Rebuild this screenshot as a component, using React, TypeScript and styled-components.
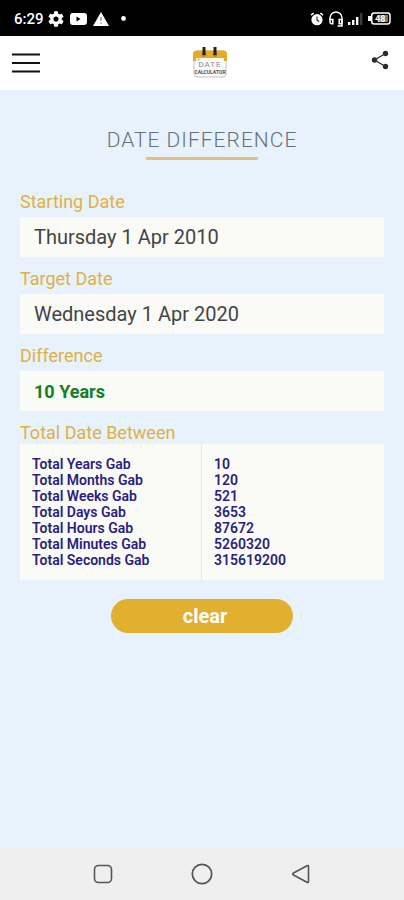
import React, { useState } from "react";
import styled, { createGlobalStyle } from "styled-components";

const GlobalStyle = createGlobalStyle`
  *, *::before, *::after { box-sizing: border-box; }
  body {
    margin: 0;
    background: #e7f2fc;
    font-family: Roboto, "Liberation Sans", sans-serif;
  }
  button, input { font-family: inherit; }
`;

const Screen = styled.div`
  display: flex;
  flex-direction: column;
  min-height: 100vh;
`;

const StatusBar = styled.div`
  display: flex;
  align-items: center;
  justify-content: space-between;
  height: 36px;
  padding: 1px 13px 0 14px;
  background: #000;
  color: #fff;
`;

const StatusGroup = styled.div<{ $gap: number }>`
  display: flex;
  align-items: center;
  gap: ${(p) => p.$gap}px;
`;

const Clock = styled.span`
  font-size: 15px;
  line-height: 20px;
  font-weight: 500;
`;

const Header = styled.header`
  display: flex;
  align-items: center;
  justify-content: space-between;
  height: 54px;
  padding: 0 15px 0 12px;
  background: #fff;
`;

const IconButton = styled.button`
  display: flex;
  padding: 0;
  border: 0;
  background: none;
  color: #222;
  cursor: pointer;
`;

const MenuButton = styled(IconButton)`
  padding-right: 8px;
`;

const ShareButton = styled(IconButton)`
  padding-bottom: 7px;
`;

const Main = styled.main`
  flex: 1;
  display: flex;
  flex-direction: column;
  padding: 36px 20px 24px;
`;

const Title = styled.h1`
  align-self: center;
  display: flex;
  flex-direction: column;
  align-items: center;
  margin: 0 0 32px;
  color: #65717b;
  font-size: 21px;
  line-height: 28px;
  font-weight: 300;
  letter-spacing: 1px;

  &::after {
    content: "";
    width: 112px;
    height: 3px;
    margin-top: 3px;
    background: #e2c080;
  }
`;

const Form = styled.form`
  display: flex;
  flex-direction: column;
  gap: 12px;
`;

const Field = styled.div<{ $tight?: boolean }>`
  display: flex;
  flex-direction: column;
  gap: ${(p) => (p.$tight ? 1 : 5)}px;
`;

const Label = styled.label`
  align-self: flex-start;
  color: #dfb142;
  font-size: 18px;
  line-height: 20px;
`;

const DateInput = styled.input`
  width: 100%;
  height: 40px;
  padding: 0 14px;
  border: 0;
  background: #fafaf7;
  color: #444;
  font-size: 20px;
`;

const Result = styled.output`
  height: 40px;
  padding: 0 14px;
  background: #fafaf7;
  color: #128023;
  font-size: 18px;
  line-height: 42px;
  font-weight: 700;
`;

const Totals = styled.table`
  width: 100%;
  border-collapse: separate;
  border-spacing: 0;
  table-layout: fixed;
  background: #fafaf7;
  color: #2a1f80;
  font-size: 14px;
  line-height: 16px;
  font-weight: 600;
  text-align: left;

  th, td { padding: 0 12px; font-weight: inherit; }
  th { border-right: 1px solid #e4e5e4; }
  tr:first-child > * { padding-top: 12px; }
  tr:last-child > * { padding-bottom: 12px; }
`;

const ClearButton = styled.button`
  align-self: center;
  width: 50%;
  height: 34px;
  margin-top: 7px;
  padding: 0 0 0 6px;
  border: 0;
  border-radius: 17px;
  background: #e0b02e;
  color: #fff;
  font-size: 20px;
  line-height: 34px;
  font-weight: 700;
  cursor: pointer;
`;

const NavBar = styled.nav`
  display: flex;
  align-items: center;
  justify-content: center;
  gap: 78px;
  height: 53px;
  background: #efefef;
`;

const NavButton = styled(IconButton)`
  color: #555;
`;

const GearIcon = () => (
  <svg width="16" height="16" viewBox="2 2 20 20" fill="currentColor" aria-hidden="true">
    <path d="M19.14 12.94a7 7 0 0 0 0-1.88l2.03-1.58a.5.5 0 0 0 .12-.61l-1.92-3.32a.5.5 0 0 0-.59-.22l-2.39.96a7 7 0 0 0-1.62-.94l-.36-2.54a.5.5 0 0 0-.48-.41h-3.84a.5.5 0 0 0-.47.41l-.36 2.54a7 7 0 0 0-1.62.94l-2.39-.96a.5.5 0 0 0-.59.22L2.74 8.87a.5.5 0 0 0 .12.61l2.03 1.58a7 7 0 0 0 0 1.88l-2.03 1.58a.5.5 0 0 0-.12.61l1.92 3.32c.12.22.37.29.59.22l2.39-.96a7 7 0 0 0 1.62.94l.36 2.54c.05.24.24.41.48.41h3.84c.24 0 .44-.17.47-.41l.36-2.54a7 7 0 0 0 1.62-.94l2.39.96c.22.08.47 0 .59-.22l1.92-3.32a.5.5 0 0 0-.12-.61zM12 15.2A3.2 3.2 0 1 1 12 8.8a3.2 3.2 0 0 1 0 6.4z" />
  </svg>
);

const VideoIcon = () => (
  <svg width="17" height="12" viewBox="0 0 17 12" aria-hidden="true">
    <rect width="17" height="12" rx="3" fill="#fff" />
    <path d="M6.5 3.500 10.500 6 6.500 8.500z" fill="#000" />
  </svg>
);

const WarningIcon = () => (
  <svg width="16" height="14" viewBox="0 0 16 14" aria-hidden="true">
    <path d="M8 0 16 14H0z" fill="#fff" />
    <path d="M8 5v4M8 10.500V12" stroke="#888" strokeWidth="1.200" />
  </svg>
);

const DotIcon = () => (
  <svg width="5" height="5" viewBox="0 0 5 5" aria-hidden="true">
    <circle cx="2.500" cy="2.500" r="2.400" fill="#fff" />
  </svg>
);

const AlarmIcon = () => (
  <svg width="14" height="14" viewBox="0 0 14 14" fill="none" aria-hidden="true">
    <circle cx="7" cy="7.700" r="5.600" fill="#fff" />
    <path d="M1 3.200 3.700 1M13 3.200 10.300 1" stroke="#fff" strokeWidth="1.600" />
    <path d="M7 4.600v3.300l2.200 1.600" stroke="#222" strokeWidth="1.100" />
  </svg>
);

const HeadsetIcon = () => (
  <svg width="14" height="16" viewBox="0 0 14 16" fill="none" stroke="#fff" strokeWidth="1.500" aria-hidden="true">
    <path d="M1 9V7a6 6 0 0 1 12 0v5.500" />
    <path d="M1 8.500h2.800v4.200H2.400A1.400 1.400 0 0 1 1 11.300zM13 8.500h-2.800v4.200H13zM13 12.500V15H8.500" />
  </svg>
);

const SignalIcon = () => (
  <svg width="15" height="13" viewBox="0 0 15 13" aria-hidden="true">
    <path d="M0 10h2.400v3H0zM4 8h2.400v5H4zM8 5h2.400v8H8z" fill="#fff" />
    <path d="M12 1h2.400v12H12z" fill="#3d3d3d" />
  </svg>
);

const BatteryIcon = () => (
  <svg width="23" height="13" viewBox="0 0 23 13" aria-label="Battery 48">
    <path d="M0 4h3v5H0z" fill="#fff" />
    <rect x="3.700" y="1" width="18.300" height="11" rx="2.500" fill="none" stroke="#fff" strokeWidth="1.500" />
    <rect x="11" y="3" width="9" height="7" fill="#777" />
    <text x="7" y="10" fill="#fff" fontSize="9" fontWeight="700">48</text>
  </svg>
);

const MenuIcon = () => (
  <svg width="28" height="22" viewBox="0 0 28 22" stroke="#111" strokeWidth="2.200" aria-hidden="true">
    <path d="M0 2.500h28M0 11h28M0 19.500h28" />
  </svg>
);

const ShareIcon = () => (
  <svg width="18" height="20" viewBox="0 0 18 20" aria-hidden="true">
    <path d="M14.500 3.500 3.500 10l11 6.500" fill="none" stroke="#333" strokeWidth="1.400" />
    <g fill="#2b2b2b">
      <circle cx="14.500" cy="3.500" r="2.700" />
      <circle cx="3.500" cy="10" r="2.700" />
      <circle cx="14.500" cy="16.500" r="2.700" />
    </g>
  </svg>
);

const Logo = () => (
  <svg width="36" height="34" viewBox="0 0 36 34" role="img" aria-label="Date Calculator">
    <rect x="2" y="5" width="32" height="26" rx="3" fill="#fafafa" stroke="#c4c4c4" />
    <path d="M1 15V8a3.500 3.500 0 0 1 3.500-3.500h27A3.500 3.500 0 0 1 35 8v7z" fill="#e5ab25" />
    <path d="M4 12h28v4H4z" fill="#fafafa" />
    <circle cx="6.500" cy="13.500" r="1" fill="#b5a36c" />
    <circle cx="12" cy="8.500" r="2.200" fill="#a88029" />
    <circle cx="23" cy="8.500" r="2.200" fill="#a88029" />
    <path d="M12 1v8M23 1v8" stroke="#222" strokeWidth="3" />
    <text x="18" y="21" textAnchor="middle" fontSize="8" letterSpacing="1" fill="#8b8b8b">DATE</text>
    <text x="18" y="28" textAnchor="middle" fontSize="5" fontWeight="700" fill="#555">CALCULATOR</text>
  </svg>
);

const navProps = {
  width: 20,
  height: 20,
  viewBox: "0 0 20 20",
  fill: "none",
  stroke: "currentColor",
  strokeWidth: 1.6,
  "aria-hidden": true,
};

const totals = [
  ["Years", "10"],
  ["Months", "120"],
  ["Weeks", "521"],
  ["Days", "3653"],
  ["Hours", "87672"],
  ["Minutes", "5260320"],
  ["Seconds", "315619200"],
];

export default function App() {
  const [start, setStart] = useState("Thursday 1 Apr 2010");
  const [target, setTarget] = useState("Wednesday 1 Apr 2020");
  const [cleared, setCleared] = useState(false);

  const clear = () => {
    setStart("");
    setTarget("");
    setCleared(true);
  };

  return (
    <Screen>
      <GlobalStyle />
      <StatusBar>
        <StatusGroup $gap={12}>
          <StatusGroup $gap={4}>
            <Clock>6:29</Clock>
            <StatusGroup $gap={6}>
              <GearIcon />
              <VideoIcon />
              <WarningIcon />
            </StatusGroup>
          </StatusGroup>
          <DotIcon />
        </StatusGroup>
        <StatusGroup $gap={5}>
          <AlarmIcon />
          <HeadsetIcon />
          <SignalIcon />
          <BatteryIcon />
        </StatusGroup>
      </StatusBar>
      <Header>
        <MenuButton type="button" aria-label="Menu">
          <MenuIcon />
        </MenuButton>
        <Logo />
        <ShareButton type="button" aria-label="Share">
          <ShareIcon />
        </ShareButton>
      </Header>
      <Main>
        <Title>DATE DIFFERENCE</Title>
        <Form onSubmit={(e) => e.preventDefault()}>
          <Field>
            <Label htmlFor="start">Starting Date</Label>
            <DateInput id="start" value={start} onChange={(e) => setStart(e.target.value)} />
          </Field>
          <Field>
            <Label htmlFor="target">Target Date</Label>
            <DateInput id="target" value={target} onChange={(e) => setTarget(e.target.value)} />
          </Field>
          <Field>
            <Label htmlFor="difference">Difference</Label>
            <Result id="difference">{cleared ? "" : "10 Years"}</Result>
          </Field>
          <Field $tight>
            <Label as="span" id="totals-label">Total Date Between</Label>
            <Totals aria-labelledby="totals-label">
              <tbody>
                {totals.map(([unit, value]) => (
                  <tr key={unit}>
                    <th scope="row">Total {unit} Gab</th>
                    <td>{cleared ? "" : value}</td>
                  </tr>
                ))}
              </tbody>
            </Totals>
          </Field>
          <ClearButton type="button" onClick={clear}>clear</ClearButton>
        </Form>
      </Main>
      <NavBar aria-label="System">
        <NavButton type="button" aria-label="Recent apps">
          <svg {...navProps}>
            <rect x="1.500" y="1.500" width="17" height="17" rx="4" />
          </svg>
        </NavButton>
        <NavButton type="button" aria-label="Home">
          <svg {...navProps} width={22} height={22}>
            <circle cx="10" cy="10" r="8.800" />
          </svg>
        </NavButton>
        <NavButton type="button" aria-label="Back">
          <svg {...navProps} strokeLinejoin="round">
            <path d="M17.500 2.500v15q0 1.500-1.500.8L2.500 11q-1.500-1 0-2L16 1.700q1.500-.7 1.500.8z" />
          </svg>
        </NavButton>
      </NavBar>
    </Screen>
  );
}
